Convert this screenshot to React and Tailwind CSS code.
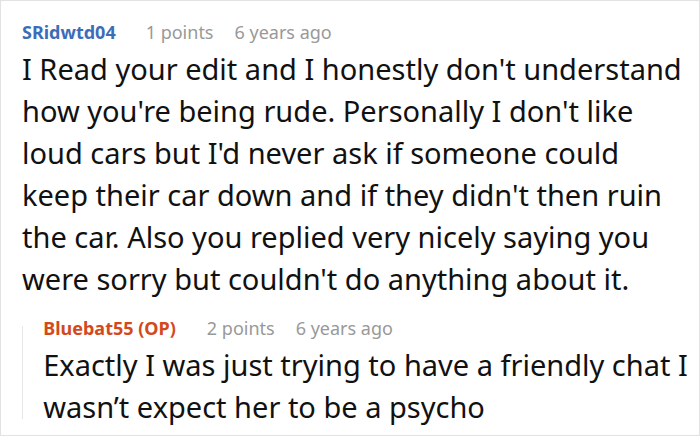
export default function App() {
  return (
    <div className="w-[700px] h-[436px] bg-white border border-[#e2e2e2] overflow-hidden font-['Noto_Sans',sans-serif]">
      <div className="pl-[21px] pt-[17px]">
        <div className="flex items-baseline text-[18px] leading-[28px]">
          <span className="font-bold text-[#3b6db8]">SRidwtd04</span>
          <span className="ml-[30px] text-[#999999]">1 points</span>
          <span className="ml-[21px] text-[#999999]">6 years ago</span>
        </div>
        <p className="mt-[2px] text-[29px] leading-[42px] text-[#111111] pr-[8px]">
          I Read your edit and I honestly don't understand how you're being rude. Personally I don't like loud cars but I'd never ask if someone could keep their car down and if they didn't then ruin the car. Also you replied very nicely saying you were sorry but couldn't do anything about it.
        </p>
        {/* reply */}
        <div className="mt-[14px] flex">
          <div className="w-[2px] mt-[12px] mb-[9px] bg-[#e6e6e6]" />
          <div className="pl-[20px]">
            <div className="flex items-baseline text-[18px] leading-[28px]">
              <span className="font-bold text-[#d4491b]">Bluebat55 (OP)</span>
              <span className="ml-[31px] text-[#999999]">2 points</span>
              <span className="ml-[21px] text-[#999999]">6 years ago</span>
            </div>
            <p className="mt-[2px] text-[29px] leading-[42px] text-[#111111]">
              Exactly I was just trying to have a friendly chat I wasn’t expect her to be a psycho
            </p>
          </div>
        </div>
      </div>
    </div>
  );
}
